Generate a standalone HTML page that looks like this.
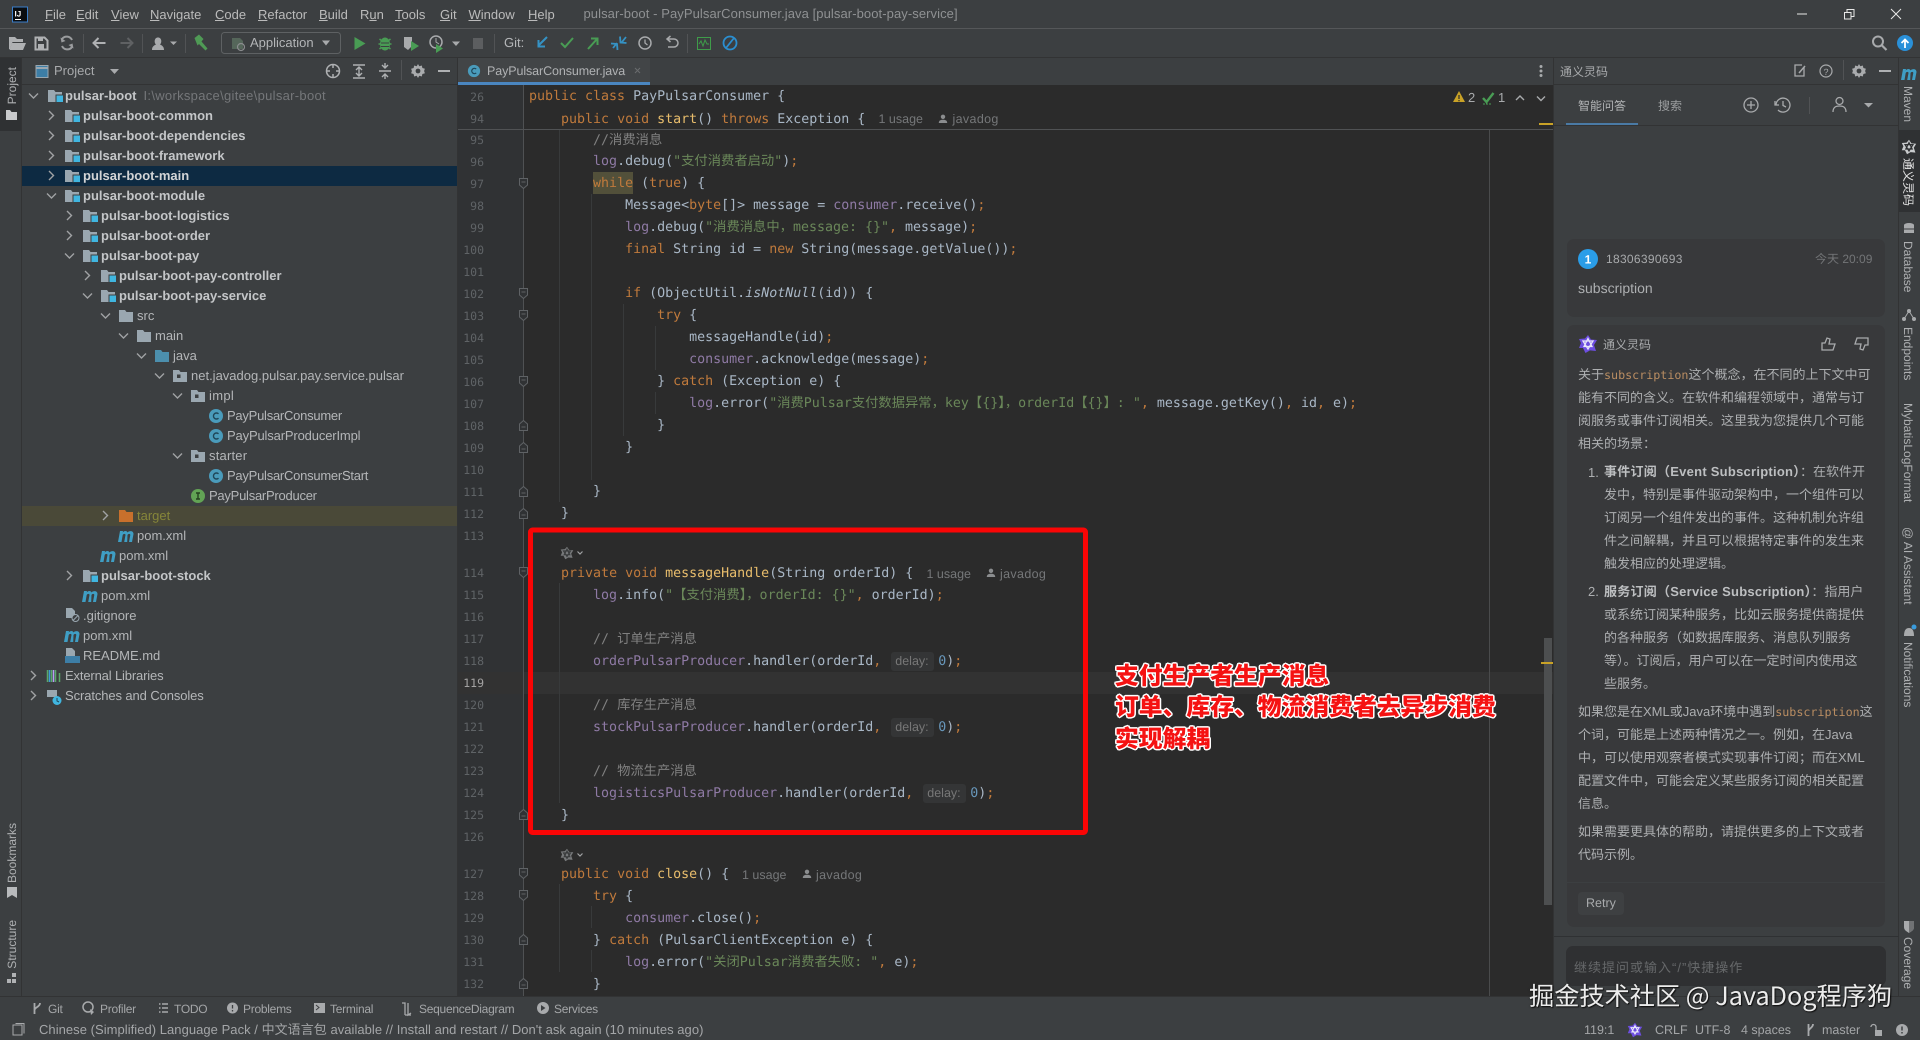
<!DOCTYPE html>
<html><head><meta charset="utf-8"><title>pulsar-boot</title>
<style>
html,body{margin:0;padding:0;width:1920px;height:1040px;overflow:hidden;background:#3c3f41}
*{box-sizing:border-box}
.a{position:absolute}
body{font-family:"Liberation Sans","Noto Sans CJK SC",sans-serif;color:#bbb;font-size:13px;text-rendering:geometricPrecision}
#root{position:absolute;left:0;top:0;width:1920px;height:1040px;filter:blur(.35px)}
.m{position:absolute;top:4px;height:21px;line-height:21px;font-size:13px;color:#bbb;white-space:nowrap}
.t{position:absolute;height:20px;line-height:20px;color:#b4b6b8;letter-spacing:-.25px;white-space:nowrap}
.b{font-weight:bold;letter-spacing:0;color:#c4c6c8}
.c{position:absolute;left:529px;margin:0;height:22px;line-height:22px;font:13.3px/22px "DejaVu Sans Mono","Noto Sans CJK SC",monospace;color:#a9b7c6;white-space:pre}
.n{position:absolute;left:458px;width:26px;height:22px;line-height:22px;text-align:right;font:11.5px/22px "DejaVu Sans Mono",monospace;color:#5f6366}
.k{color:#c07a3c}.s{color:#6a8759}.g{color:#808080}.f{color:#8f7aa5}.y{color:#e8bd6c}.h{color:#7f8183}.num{color:#6897bb}
.i{font-style:italic}
.u{position:absolute;font:12.5px/22px "Liberation Sans",sans-serif;color:#757779;height:22px;white-space:nowrap}
.j{letter-spacing:.35px}
.d{display:inline-block;width:43px;height:19px;margin:0 4px 0 10px;background:#343536;border-radius:3px;font:12.5px/19px "Liberation Sans",sans-serif;color:#777;padding-left:4px;vertical-align:top;margin-top:1px}
.vr{position:absolute;writing-mode:vertical-rl;text-orientation:sideways;font-size:12px;line-height:16px;width:16px;color:#aeb0b2;white-space:nowrap}
.vl{position:absolute;writing-mode:vertical-rl;text-orientation:sideways;transform:rotate(180deg);font-size:12px;line-height:16px;width:16px;color:#aeb0b2;white-space:nowrap}
.p{position:absolute;height:23px;line-height:23px;font-size:13px;color:#adafb1;white-space:nowrap}
.p code{font:11.7px/23px "DejaVu Sans Mono",monospace;color:#b98d62}
.p b{color:#bdbfc1;letter-spacing:.25px}
.st{position:absolute;top:1020px;height:20px;line-height:20px;font-size:12.5px;color:#a4a6a8;white-space:nowrap}
.tb{position:absolute;top:999px;height:20px;line-height:20px;font-size:12px;letter-spacing:-.27px;color:#a4a6a8;white-space:nowrap}
.an{position:absolute;left:1115px;height:30px;line-height:30px;font-size:23.8px;font-weight:900;color:#f51212;white-space:nowrap;font-family:"Noto Sans CJK SC",sans-serif;text-shadow:-1.5px 0 #fff,1.5px 0 #fff,0 -1.5px #fff,0 1.5px #fff,-1.2px -1.2px #fff,1.2px -1.2px #fff,-1.2px 1.2px #fff,1.2px 1.2px #fff}
</style></head><body><div id="root">

<!-- structural backgrounds -->
<div class="a" style="left:0;top:28px;width:1920px;height:1px;background:#555759"></div>
<div class="a" style="left:0;top:57px;width:1920px;height:1px;background:#323334"></div>
<div class="a" style="left:0;top:58px;width:21px;height:73px;background:#2f3133"></div>
<div class="a" style="left:21px;top:58px;width:1px;height:938px;background:#323334"></div>
<div class="a" style="left:22px;top:84px;width:436px;height:1px;background:#323334"></div>
<div class="a" style="left:22px;top:165.7px;width:435px;height:20px;background:#0d2a42"></div>
<div class="a" style="left:22px;top:505.5px;width:435px;height:20px;background:#4a4938"></div>
<div class="a" style="left:457px;top:58px;width:1px;height:938px;background:#323334"></div>

<!-- editor -->
<div class="a" style="left:458px;top:58px;width:192px;height:27px;background:#424547"></div>
<div class="a" style="left:458px;top:82px;width:192px;height:3px;background:#4a86c0"></div>
<div class="a" style="left:458px;top:85px;width:1095px;height:911px;background:#2b2b2b;overflow:hidden"></div>
<div class="a" style="left:458px;top:85px;width:66px;height:911px;background:#303234"></div>
<div class="a" style="left:458px;top:671.6px;width:1095px;height:22px;background:#323232"></div>
<div class="a" style="left:1489px;top:129px;width:1px;height:867px;background:#4a4b4c"></div>
<div class="a" style="left:593px;top:172px;width:40px;height:22px;background:#52503a"></div>
<div class="a" style="left:1544px;top:638px;width:8px;height:267px;background:#4d4f50"></div>
<div class="a" style="left:1539px;top:122.5px;width:14px;height:2px;background:#c9a227"></div>
<div class="a" style="left:1541px;top:662px;width:12px;height:2px;background:#c9a227"></div>

<!-- right panel -->
<div class="a" style="left:1553px;top:58px;width:1px;height:938px;background:#323334"></div>
<div class="a" style="left:1554px;top:84px;width:345px;height:1px;background:#323334"></div>
<div class="a" style="left:1554px;top:125px;width:345px;height:1px;background:#323334"></div>
<div class="a" style="left:1566px;top:123px;width:72px;height:2px;background:#4a7aa5"></div>
<div class="a" style="left:1898px;top:58px;width:1px;height:938px;background:#323334"></div>
<div class="a" style="left:1899px;top:130px;width:21px;height:82px;background:#2f3133"></div>
<div class="a" style="left:1567px;top:239px;width:318px;height:78px;background:#38393b;border-radius:7px"></div>
<div class="a" style="left:1567px;top:325px;width:318px;height:557px;background:#38393b;border-radius:7px 7px 0 0"></div>
<div class="a" style="left:1567px;top:883px;width:318px;height:44px;background:#38393b;border-radius:0 0 7px 7px"></div>
<div class="a" style="left:1578px;top:892px;width:46px;height:23px;background:#3e4042;border-radius:4px"></div>
<div class="a" style="left:1554px;top:936px;width:345px;height:1px;background:#2f3133"></div>
<div class="a" style="left:1566px;top:946px;width:320px;height:40px;background:#2f3032;border-radius:7px"></div>
<div class="a" style="left:0;top:996px;width:1920px;height:1px;background:#323334"></div>

<!-- menu -->
<span class="m" style="left:45px"><u>F</u>ile</span>
<span class="m" style="left:76px"><u>E</u>dit</span>
<span class="m" style="left:111px"><u>V</u>iew</span>
<span class="m" style="left:150px"><u>N</u>avigate</span>
<span class="m" style="left:215px"><u>C</u>ode</span>
<span class="m" style="left:258px"><u>R</u>efactor</span>
<span class="m" style="left:319px"><u>B</u>uild</span>
<span class="m" style="left:360px">R<u>u</u>n</span>
<span class="m" style="left:395px"><u>T</u>ools</span>
<span class="m" style="left:440px"><u>G</u>it</span>
<span class="m" style="left:468.5px"><u>W</u>indow</span>
<span class="m" style="left:528px"><u>H</u>elp</span>
<span class="m" style="left:583.5px;top:3px;color:#8f9193;letter-spacing:.08px">pulsar-boot - PayPulsarConsumer.java [pulsar-boot-pay-service]</span>
<span class="a" style="left:250px;top:33px;line-height:20px;font-size:13px;color:#b4b6b8">Application</span>
<span class="a" style="left:504px;top:33px;line-height:20px;font-size:13px;color:#b4b6b8">Git:</span>

<!-- project header -->
<span class="a" style="left:54px;top:61px;line-height:20px;font-size:13px;color:#a8aaac">Project</span>
<span class="a" style="left:487px;top:61px;line-height:20px;font-size:12.5px;color:#b0b2b4;letter-spacing:-.1px">PayPulsarConsumer.java</span>

<!-- tree -->
<span class="t b" style="left:65px;top:85.7px">pulsar-boot</span><span class="t" style="left:143.5px;top:85.7px;color:#75777a;letter-spacing:.3px">I:\workspace\gitee\pulsar-boot</span>
<span class="t b" style="left:83px;top:105.7px">pulsar-boot-common</span>
<span class="t b" style="left:83px;top:125.7px">pulsar-boot-dependencies</span>
<span class="t b" style="left:83px;top:145.7px">pulsar-boot-framework</span>
<span class="t b" style="left:83px;top:165.7px;color:#d2d4d6">pulsar-boot-main</span>
<span class="t b" style="left:83px;top:185.7px">pulsar-boot-module</span>
<span class="t b" style="left:101px;top:205.7px">pulsar-boot-logistics</span>
<span class="t b" style="left:101px;top:225.7px">pulsar-boot-order</span>
<span class="t b" style="left:101px;top:245.7px">pulsar-boot-pay</span>
<span class="t b" style="left:119px;top:265.7px">pulsar-boot-pay-controller</span>
<span class="t b" style="left:119px;top:285.7px">pulsar-boot-pay-service</span>
<span class="t" style="left:137px;top:305.7px;letter-spacing:0">src</span>
<span class="t" style="left:155px;top:325.7px;letter-spacing:0">main</span>
<span class="t" style="left:173px;top:345.7px;letter-spacing:0">java</span>
<span class="t" style="left:191px;top:365.7px;letter-spacing:0">net.javadog.pulsar.pay.service.pulsar</span>
<span class="t" style="left:209px;top:385.7px;letter-spacing:.3px">impl</span>
<span class="t" style="left:227px;top:405.7px">PayPulsarConsumer</span>
<span class="t" style="left:227px;top:425.7px;letter-spacing:-.15px">PayPulsarProducerImpl</span>
<span class="t" style="left:209px;top:445.7px;letter-spacing:.2px">starter</span>
<span class="t" style="left:227px;top:465.7px">PayPulsarConsumerStart</span>
<span class="t" style="left:209px;top:485.7px">PayPulsarProducer</span>
<span class="t" style="left:137px;top:505.7px;color:#86863a;letter-spacing:0">target</span>
<span class="t" style="left:137px;top:525.7px;letter-spacing:0">pom.xml</span>
<span class="t" style="left:119px;top:545.7px;letter-spacing:0">pom.xml</span>
<span class="t b" style="left:101px;top:565.7px">pulsar-boot-stock</span>
<span class="t" style="left:101px;top:585.7px;letter-spacing:0">pom.xml</span>
<span class="t" style="left:83px;top:605.7px;letter-spacing:0">.gitignore</span>
<span class="t" style="left:83px;top:625.7px;letter-spacing:0">pom.xml</span>
<span class="t" style="left:83px;top:645.7px;letter-spacing:0">README.md</span>
<span class="t" style="left:65px;top:665.7px;letter-spacing:-.15px">External Libraries</span>
<span class="t" style="left:65px;top:685.7px;letter-spacing:-.1px">Scratches and Consoles</span>

<!-- line numbers -->
<div class="a" style="left:0;top:.5px">
<div class="n" style="top:85.7px">26</div><div class="n" style="top:107.3px">94</div>
<div class="n" style="top:128.3px">95</div><div class="n" style="top:150.3px">96</div><div class="n" style="top:172.3px">97</div><div class="n" style="top:194.3px">98</div><div class="n" style="top:216.3px">99</div><div class="n" style="top:238.3px">100</div><div class="n" style="top:260.3px">101</div><div class="n" style="top:282.3px">102</div><div class="n" style="top:304.3px">103</div><div class="n" style="top:326.3px">104</div><div class="n" style="top:348.3px">105</div><div class="n" style="top:370.3px">106</div><div class="n" style="top:392.3px">107</div><div class="n" style="top:414.3px">108</div><div class="n" style="top:436.3px">109</div><div class="n" style="top:458.3px">110</div><div class="n" style="top:480.3px">111</div><div class="n" style="top:502.3px">112</div><div class="n" style="top:524.3px">113</div>
<div class="n" style="top:561.6px">114</div><div class="n" style="top:583.6px">115</div><div class="n" style="top:605.6px">116</div><div class="n" style="top:627.6px">117</div><div class="n" style="top:649.6px">118</div><div class="n" style="top:671.6px;color:#a4a3a3">119</div><div class="n" style="top:693.6px">120</div><div class="n" style="top:715.6px">121</div><div class="n" style="top:737.6px">122</div><div class="n" style="top:759.6px">123</div><div class="n" style="top:781.6px">124</div><div class="n" style="top:803.6px">125</div><div class="n" style="top:825.6px">126</div>
<div class="n" style="top:862.6px">127</div><div class="n" style="top:884.6px">128</div><div class="n" style="top:906.6px">129</div><div class="n" style="top:928.6px">130</div><div class="n" style="top:950.6px">131</div><div class="n" style="top:972.6px">132</div>
</div>

<!-- code -->
<div class="a" style="left:0;top:1px">
<pre class="c" style="top:85.4px"><span class="k">public class </span>PayPulsarConsumer {</pre>
<pre class="c" style="top:108.2px">    <span class="k">public void </span><span class="y">start</span>() <span class="k">throws </span>Exception {</pre>
<pre class="c" style="top:129.3px">        <span class="g">//消费消息</span></pre>
<pre class="c" style="top:150.3px">        <span class="f">log</span>.debug(<span class="s">"支付消费者启动"</span>)<span class="k">;</span></pre>
<pre class="c" style="top:172.3px">        <span class="k">while </span>(<span class="k">true</span>) {</pre>
<pre class="c" style="top:194.3px">            Message&lt;<span class="k">byte</span>[]&gt; message = <span class="f">consumer</span>.receive()<span class="k">;</span></pre>
<pre class="c" style="top:216.3px">            <span class="f">log</span>.debug(<span class="s">"消费消息中，message: {}"</span><span class="k">, </span>message)<span class="k">;</span></pre>
<pre class="c" style="top:238.3px">            <span class="k">final </span>String id = <span class="k">new </span>String(message.getValue())<span class="k">;</span></pre>
<pre class="c" style="top:282.3px">            <span class="k">if </span>(ObjectUtil.<span class="i">isNotNull</span>(id)) {</pre>
<pre class="c" style="top:304.3px">                <span class="k">try </span>{</pre>
<pre class="c" style="top:326.3px">                    messageHandle(id)<span class="k">;</span></pre>
<pre class="c" style="top:348.3px">                    <span class="f">consumer</span>.acknowledge(message)<span class="k">;</span></pre>
<pre class="c" style="top:370.3px">                } <span class="k">catch </span>(Exception e) {</pre>
<pre class="c" style="top:392.3px">                    <span class="f">log</span>.error(<span class="s">"消费Pulsar支付数据异常，key【{}】，orderId【{}】: "</span><span class="k">, </span>message.getKey()<span class="k">, </span>id<span class="k">, </span>e)<span class="k">;</span></pre>
<pre class="c" style="top:414.3px">                }</pre>
<pre class="c" style="top:436.3px">            }</pre>
<pre class="c" style="top:480.3px">        }</pre>
<pre class="c" style="top:502.3px">    }</pre>
<pre class="c" style="top:561.6px">    <span class="k">private void </span><span class="y">messageHandle</span>(String orderId) {</pre>
<pre class="c" style="top:583.6px">        <span class="f">log</span>.info(<span class="s">"【支付消费】，orderId: {}"</span><span class="k">, </span>orderId)<span class="k">;</span></pre>
<pre class="c" style="top:627.6px">        <span class="g">// 订单生产消息</span></pre>
<pre class="c" style="top:649.6px">        <span class="f">orderPulsarProducer</span>.handler(orderId<span class="k">,</span><span class="d">delay:</span><span class="num">0</span>)<span class="k">;</span></pre>
<pre class="c" style="top:693.6px">        <span class="g">// 库存生产消息</span></pre>
<pre class="c" style="top:715.6px">        <span class="f">stockPulsarProducer</span>.handler(orderId<span class="k">,</span><span class="d">delay:</span><span class="num">0</span>)<span class="k">;</span></pre>
<pre class="c" style="top:759.6px">        <span class="g">// 物流生产消息</span></pre>
<pre class="c" style="top:781.6px">        <span class="f">logisticsPulsarProducer</span>.handler(orderId<span class="k">,</span><span class="d">delay:</span><span class="num">0</span>)<span class="k">;</span></pre>
<pre class="c" style="top:803.6px">    }</pre>
<pre class="c" style="top:862.6px">    <span class="k">public void </span><span class="y">close</span>() {</pre>
<pre class="c" style="top:884.6px">        <span class="k">try </span>{</pre>
<pre class="c" style="top:906.6px">            <span class="f">consumer</span>.close()<span class="k">;</span></pre>
<pre class="c" style="top:928.6px">        } <span class="k">catch </span>(PulsarClientException e) {</pre>
<pre class="c" style="top:950.6px">            <span class="f">log</span>.error(<span class="s">"关闭Pulsar消费者失败: "</span><span class="k">, </span>e)<span class="k">;</span></pre>
<pre class="c" style="top:972.6px">        }</pre>
</div>
<span class="u" style="left:878.5px;top:108px">1 usage</span><span class="u j" style="left:952.5px;top:108px">javadog</span>
<span class="u" style="left:926.5px;top:562.5px">1 usage</span><span class="u j" style="left:1000px;top:562.5px">javadog</span>
<span class="u" style="left:742px;top:863.5px">1 usage</span><span class="u j" style="left:816px;top:863.5px">javadog</span>
<span class="a" style="left:1468px;top:89px;line-height:18px;font-size:13px;color:#a8aaac">2</span>
<span class="a" style="left:1498px;top:89px;line-height:18px;font-size:13px;color:#a8aaac">1</span>

<!-- right panel text -->
<span class="a" style="left:1560px;top:62px;line-height:20px;font-size:12px;color:#a8aaac">通义灵码</span>
<span class="a" style="left:1578px;top:96px;line-height:20px;font-size:12px;color:#b0b2b4">智能问答</span>
<span class="a" style="left:1658px;top:96px;line-height:20px;font-size:12px;color:#9c9ea0">搜索</span>
<span class="a" style="left:1606px;top:249px;line-height:20px;font-size:12px;letter-spacing:.3px;color:#a8aaac">18306390693</span>
<span class="a" style="left:1815px;top:249px;line-height:20px;font-size:12px;color:#737577">今天 20:09</span>
<span class="a" style="left:1578px;top:278px;line-height:20px;font-size:14px;color:#adafb1">subscription</span>
<span class="a" style="left:1603px;top:335px;line-height:20px;font-size:12px;color:#a8aaac">通义灵码</span>
<div class="p" style="left:1578px;top:362.5px">关于<code>subscription</code>这个概念，在不同的上下文中可</div>
<div class="p" style="left:1578px;top:385.5px">能有不同的含义。在软件和编程领域中，通常与订</div>
<div class="p" style="left:1578px;top:408.5px">阅服务或事件订阅相关。这里我为您提供几个可能</div>
<div class="p" style="left:1578px;top:431.5px">相关的场景：</div>
<div class="p" style="left:1588px;top:461px">1.</div>
<div class="p" style="left:1604px;top:460px"><b>事件订阅（Event Subscription）</b>：在软件开</div>
<div class="p" style="left:1604px;top:483px">发中，特别是事件驱动架构中，一个组件可以</div>
<div class="p" style="left:1604px;top:506px">订阅另一个组件发出的事件。这种机制允许组</div>
<div class="p" style="left:1604px;top:529px">件之间解耦，并且可以根据特定事件的发生来</div>
<div class="p" style="left:1604px;top:552px">触发相应的处理逻辑。</div>
<div class="p" style="left:1588px;top:580px">2.</div>
<div class="p" style="left:1604px;top:579.5px"><b>服务订阅（Service Subscription）</b>：指用户</div>
<div class="p" style="left:1604px;top:602.5px">或系统订阅某种服务，比如云服务提供商提供</div>
<div class="p" style="left:1604px;top:625.5px">的各种服务（如数据库服务、消息队列服务</div>
<div class="p" style="left:1604px;top:648.5px">等）。订阅后，用户可以在一定时间内使用这</div>
<div class="p" style="left:1604px;top:671.5px">些服务。</div>
<div class="p" style="left:1578px;top:699.5px">如果您是在XML或Java环境中遇到<code>subscription</code>这</div>
<div class="p" style="left:1578px;top:722.5px">个词，可能是上述两种情况之一。例如，在Java</div>
<div class="p" style="left:1578px;top:745.5px">中，可以使用观察者模式实现事件订阅；而在XML</div>
<div class="p" style="left:1578px;top:768.5px">配置文件中，可能会定义某些服务订阅的相关配置</div>
<div class="p" style="left:1578px;top:791.5px">信息。</div>
<div class="p" style="left:1578px;top:819.5px">如果需要更具体的帮助，请提供更多的上下文或者</div>
<div class="p" style="left:1578px;top:842.5px">代码示例。</div>
<span class="a" style="left:1586px;top:893px;line-height:20px;font-size:12.5px;color:#a8aaac">Retry</span>
<span class="a" style="left:1574px;top:958px;line-height:20px;font-size:13px;letter-spacing:1px;color:#66686a">继续提问或输入“/”快捷操作</span>

<!-- vertical labels -->
<span class="vl" style="left:4px;top:67px">Project</span>
<span class="vl" style="left:4px;top:823px">Bookmarks</span>
<span class="vl" style="left:4px;top:920px">Structure</span>
<span class="vr" style="left:1900px;top:86px">Maven</span>
<span class="vr" style="left:1900px;top:158px;color:#e4e4e4">通义灵码</span>
<span class="vr" style="left:1900px;top:241px">Database</span>
<span class="vr" style="left:1900px;top:327px">Endpoints</span>
<span class="vr" style="left:1900px;top:403px">MybatisLogFormat</span>
<span class="vr" style="left:1900px;top:527px">@ AI Assistant</span>
<span class="vr" style="left:1900px;top:642px">Notifications</span>
<span class="vr" style="left:1900px;top:937px">Coverage</span>

<!-- bottom tool buttons -->
<span class="tb" style="left:48px">Git</span>
<span class="tb" style="left:100px">Profiler</span>
<span class="tb" style="left:174px">TODO</span>
<span class="tb" style="left:243px">Problems</span>
<span class="tb" style="left:330px">Terminal</span>
<span class="tb" style="left:419px">SequenceDiagram</span>
<span class="tb" style="left:554px">Services</span>

<!-- status -->
<span class="st" style="left:39px;font-size:13px;letter-spacing:.04px">Chinese (Simplified) Language Pack / 中文语言包 available // Install and restart // Don't ask again (10 minutes ago)</span>
<span class="st" style="left:1584px">119:1</span>
<span class="st" style="left:1655px">CRLF</span>
<span class="st" style="left:1695px">UTF-8</span>
<span class="st" style="left:1741px">4 spaces</span>
<span class="st" style="left:1822px">master</span>

<!-- icons -->
<svg class="a" style="left:0;top:0" width="1920" height="1040" viewBox="0 0 1920 1040" xmlns="http://www.w3.org/2000/svg" fill="none">
<defs>
<symbol id="mod" viewBox="0 0 16 16"><path d="M1 2h6l1.5 2H15v10H1z" fill="#9aa7b0"/><rect x="8.500" y="6.500" width="7.500" height="8" fill="#3c3f41"/><rect x="9.500" y="7.500" width="6.500" height="6.500" fill="#40b6e0"/></symbol>
<symbol id="fld" viewBox="0 0 16 16"><path d="M1 2h6l1.5 2H15v10H1z" fill="#9aa7b0"/></symbol>
<symbol id="blu" viewBox="0 0 16 16"><path d="M1 2h6l1.5 2H15v10H1z" fill="#4c8fad"/></symbol>
<symbol id="org" viewBox="0 0 16 16"><path d="M1 2h6l1.5 2H15v10H1z" fill="#c8702c"/></symbol>
<symbol id="pkg" viewBox="0 0 16 16"><path d="M1 2h6l1.5 2H15v10H1z" fill="#9aa7b0"/><rect x="5" y="6.500" width="3.500" height="3.500" fill="#3c3f41"/></symbol>
<symbol id="cls" viewBox="0 0 16 16"><circle cx="8" cy="8" r="7" fill="#4a9bbb"/><path d="M10.500 5.800A3 3 0 1 0 10.500 10.200" stroke="#1f4658" stroke-width="1.400"/></symbol>
<symbol id="itf" viewBox="0 0 16 16"><circle cx="8" cy="8" r="7" fill="#62a355"/><path d="M6 5h4M8 5v6M6 11h4" stroke="#24401f" stroke-width="1.400"/></symbol>
<symbol id="mvn" viewBox="0 0 16 16"><path d="M0 14L2 3h3l-.3 1.500C6 2.500 9 2.500 9.500 4.500 11 2.500 15.500 2.500 15.500 6L14 14h-3l1.300-7c0-1.500-2-1.500-2.800 0L9.200 14h-3l1.300-7c0-1.500-2-1.500-2.800 0L3.500 14z" fill="#3f9ec4"/></symbol>
<symbol id="fo" viewBox="0 0 9 11"><path d="M.5.5h8v6.500L4.500 10.500.5 7z" fill="#303234" stroke="#5f6265"/><path d="M2.500 4h4" stroke="#5f6265"/></symbol>
<symbol id="fc" viewBox="0 0 9 11"><path d="M.5 10.500h8V4L4.500.5.5 4z" fill="#303234" stroke="#5f6265"/><path d="M2.500 7h4" stroke="#5f6265"/></symbol>
<symbol id="cv" viewBox="0 0 20 20"><path d="M10 1l3 4.500 6 .5-3 5 2 6-6-.6L7.500 19 5 14H1l2-5-2-4 6-.5z" fill="#76787a"/><path d="M5 7h10l-5 8zM10 4.500l4 8H6z" fill="none" stroke="#3a3c3d" stroke-width="1.600"/></symbol>
<symbol id="us" viewBox="0 0 10 10"><circle cx="5" cy="2.800" r="2.200" fill="#8b8d8f"/><path d="M.8 9c0-2.600 2-3.200 4.200-3.200S9.200 6.400 9.200 9z" fill="#8b8d8f"/></symbol>
<symbol id="logo" viewBox="0 0 20 20"><path d="M10 1l3 4.500 6 .5-3 5 2 6-6-.6L7.500 19 5 14H1l2-5-2-4 6-.5z" fill="#6d4ee0"/><path d="M5 7h10l-5 8zM10 4.500l4 8H6z" fill="none" stroke="#e8e6fa" stroke-width="1.300"/></symbol>
<symbol id="logow" viewBox="0 0 20 20"><path d="M10 1l3 4.500 6 .5-3 5 2 6-6-.6L7.500 19 5 14H1l2-5-2-4 6-.5z" fill="#c8cacc"/><path d="M5 7h10l-5 8zM10 4.500l4 8H6z" fill="none" stroke="#2f3133" stroke-width="1.500"/></symbol>
<symbol id="gear" viewBox="0 0 16 16"><path d="M8 1l1.300 2.200 2.500-.7.6 2.500 2.500.7-.8 2.300 .8 2.300-2.500.7-.6 2.500-2.500-.7L8 15l-1.300-2.200-2.500.7-.6-2.500L1.100 10.300 1.900 8l-.8-2.300 2.500-.7.6-2.500 2.500.7z" fill="#a9abad"/><circle cx="8" cy="8" r="2.400" fill="#3c3f41"/></symbol>
</defs>

<!-- logo -->
<rect x="12.500" y="7" width="15" height="15" fill="#0a0d10" stroke="#3a7dc9" stroke-width="1"/>
<text x="14.500" y="16.500" font-family="Liberation Sans" font-size="8" font-weight="bold" fill="#fff">IJ</text>
<path d="M15 19.500h6" stroke="#fff" stroke-width="1"/>

<!-- window controls -->
<path d="M1797 14h10" stroke="#e8e8e8"/>
<path d="M1847 12.500v-3h7v7h-3M1844.500 12.500h6.500v6.500h-6.500z" stroke="#e8e8e8" fill="none"/>
<path d="M1891 9l10 10M1901 9l-10 10" stroke="#e8e8e8"/>

<!-- toolbar -->
<path d="M9 37h6l2 2h6v3H12.500l-2.500 7H9z" fill="#afb1b3"/><path d="M12 43h14l-3 7H9.500z" fill="#afb1b3"/>
<path d="M35.500 37.500h9l3 3v9h-12z" stroke="#afb1b3" stroke-width="2"/><rect x="38" y="37" width="5" height="4" fill="#afb1b3"/><rect x="38" y="44" width="6" height="5" fill="#afb1b3"/>
<path d="M72 40a5.800 5.800 0 0 0-10-1M62 46a5.800 5.800 0 0 0 10 1" stroke="#9a9c9e" stroke-width="2"/><path d="M60.500 37.500l1 5 4-1.500zM73.500 48.500l-1-5-4 1.500z" fill="#9a9c9e"/>
<path d="M83.500 34v19M142.500 34v19M185.500 34v19M494.500 34v19M687.500 34v19" stroke="#515355"/>
<path d="M93.500 43h12M98.500 38l-5 5 5 5" stroke="#afb1b3" stroke-width="2"/>
<path d="M132.500 43h-12M127.500 38l5 5-5 5" stroke="#5f6163" stroke-width="2"/>
<path d="M152 50c0-3.500 2-4.500 4-5.500-2-1.500-2-7 2-7s4 5.500 2 7c2 1 4 2 4 5.500z" fill="#a8aaac"/><path d="M170 41.500h7l-3.500 3.500z" fill="#a8aaac"/>
<path d="M194.500 38l4.500-3.500 4.500 4.500-2 2.500 6 7-2 2-6.500-6.500-1.500 1.500z" fill="#4f9a55"/>
<rect x="221.500" y="32.500" width="119" height="21" rx="3" stroke="#5e6163"/>
<path d="M232 38h8l3 3v8h-11z" fill="#55665a"/><circle cx="241" cy="47" r="3.500" stroke="#8a8c8e" stroke-width="1.200"/>
<path d="M322 40.500h8l-4 5z" fill="#a8aaac"/>
<path d="M354.500 37l11 6.500-11 6.500z" fill="#499c54"/>
<ellipse cx="385" cy="44" rx="5" ry="6.500" fill="#499c54"/><path d="M379.500 39l2.500 2M390.500 39l-2.500 2M378.500 44h2M391.500 44h-2M379.500 49l2.500-2M390.500 49l-2.500-2" stroke="#499c54" stroke-width="1.500"/><path d="M381 43h8M381 46.500h8" stroke="#3c3f41"/>
<path d="M404 37h8v9l-4 4-4-3z" fill="#a8aaac"/><path d="M411 41l8 5-8 5z" fill="#499c54"/>
<circle cx="436" cy="42" r="6" stroke="#a8aaac" stroke-width="1.500"/><path d="M436 38v4l3 2" stroke="#a8aaac"/><path d="M436 44l7 4.500-7 4.500z" fill="#499c54"/>
<path d="M452 41.500h8l-4 4.500z" fill="#a8aaac"/>
<rect x="473" y="38" width="10" height="11" fill="#5c5e60"/>
<path d="M547 37l-9 9M538.500 40v6.500h6.500" stroke="#3592c4" stroke-width="2"/>
<path d="M561 43l4 4 8-9" stroke="#499c54" stroke-width="2"/>
<path d="M588 49l9-10M591 38.500h6.500v6.500" stroke="#499c54" stroke-width="2"/>
<path d="M613 48l4-5M622 42l4-5M620 36.500l.5 6 6 .5M611 43.500l6 .5.500 6" stroke="#3592c4" stroke-width="1.800"/>
<circle cx="645" cy="43" r="6" stroke="#a8aaac" stroke-width="1.500"/><path d="M645 39.500V43l2.500 2" stroke="#a8aaac" stroke-width="1.300"/>
<path d="M668 39h6a4 4 0 0 1 0 8h-6M670.500 36l-3.500 3 3.500 3" stroke="#a8aaac" stroke-width="1.500"/>
<rect x="697.500" y="37.500" width="13" height="12" stroke="#3f9c4a"/><path d="M699 44l2-3 2 5 2-6 2 4h2" stroke="#3f9c4a"/>
<circle cx="730" cy="43" r="6.500" stroke="#2b8fd0" stroke-width="1.800"/><path d="M726 48l8-10" stroke="#2b8fd0" stroke-width="1.800"/>
<circle cx="1878" cy="41.500" r="5" stroke="#a8aaac" stroke-width="2"/><path d="M1882 45.500l4.500 4.500" stroke="#a8aaac" stroke-width="2.200"/>
<circle cx="1905" cy="43" r="8" fill="#2a90d8"/><path d="M1905 48v-8M1901.500 43l3.500-3.500 3.500 3.500" stroke="#fff" stroke-width="1.800"/>

<!-- left stripe icons -->
<path d="M6 110h4l1.500 2H17v8H6z" fill="#c8cacc"/>
<path d="M7 887h10v11l-5-3-5 3z" fill="#b8babc"/>
<rect x="12" y="973" width="4" height="4" fill="#b0b2b4"/><rect x="7" y="979" width="4" height="4" fill="#b0b2b4"/><rect x="12" y="979" width="4" height="4" fill="#b0b2b4"/>

<!-- project header icons -->
<rect x="36" y="65.500" width="12" height="12" fill="#3d7ea6" stroke="#9aa7b0"/><path d="M36 68h12" stroke="#9aa7b0" stroke-width="2"/>
<path d="M110 69h9l-4.500 5z" fill="#a8aaac"/>
<circle cx="333" cy="71" r="6.500" stroke="#afb1b3" stroke-width="1.500"/><path d="M333 64v4M333 74v4M326 71h4M336 71h4" stroke="#afb1b3" stroke-width="1.500"/>
<path d="M353 65h12M353 78h12M356 70l3-3 3 3M356 73l3 3 3-3M359 67v9" stroke="#afb1b3" stroke-width="1.400"/>
<path d="M379 71h12M382 65l3 3 3-3M382 77l3-3 3 3M385 63v5M385 74v5" stroke="#afb1b3" stroke-width="1.400"/>
<path d="M401.500 60v20" stroke="#515355"/>
<use href="#gear" x="410" y="63" width="16" height="16"/>
<path d="M438 71h12" stroke="#afb1b3" stroke-width="2"/>
<use href="#cls" x="467" y="64" width="14" height="14"/>
<path d="M635 68l5 5M640 68l-5 5" stroke="#6a6c6e"/>

<!-- tree arrows -->
<g stroke="#a0a2a4" stroke-width="1.400">
<path d="M29 93.500l4.500 4.500 4.500-4.500"/>
<path d="M49 111l4.500 4.500-4.500 4.500M49 131l4.500 4.500-4.500 4.500M49 151l4.500 4.500-4.500 4.500M49 171l4.500 4.500-4.500 4.500"/>
<path d="M47 193.500l4.500 4.500 4.500-4.500"/>
<path d="M67 211l4.500 4.500-4.500 4.500M67 231l4.500 4.500-4.500 4.500"/>
<path d="M65 253.500l4.500 4.500 4.500-4.500"/>
<path d="M85 271l4.500 4.500-4.500 4.500"/>
<path d="M83 293.500l4.500 4.500 4.500-4.500M101 313.500l4.500 4.500 4.500-4.500M119 333.500l4.500 4.500 4.500-4.500M137 353.500l4.500 4.500 4.500-4.500M155 373.500l4.500 4.500 4.500-4.500M173 393.500l4.500 4.500 4.500-4.500M173 453.500l4.500 4.500 4.500-4.500"/>
<path d="M103 511l4.500 4.500-4.500 4.500M67 571l4.500 4.500-4.500 4.500M31 671l4.500 4.500-4.500 4.500M31 691l4.500 4.500-4.500 4.500"/>
</g>

<!-- tree icons -->
<use href="#mod" x="47" y="88" width="16" height="16"/>
<use href="#mod" x="64" y="108" width="16" height="16"/><use href="#mod" x="64" y="128" width="16" height="16"/><use href="#mod" x="64" y="148" width="16" height="16"/><use href="#mod" x="64" y="168" width="16" height="16"/><use href="#mod" x="64" y="188" width="16" height="16"/>
<use href="#mod" x="82" y="208" width="16" height="16"/><use href="#mod" x="82" y="228" width="16" height="16"/><use href="#mod" x="82" y="248" width="16" height="16"/>
<use href="#mod" x="100" y="268" width="16" height="16"/><use href="#mod" x="100" y="288" width="16" height="16"/>
<use href="#fld" x="118" y="308" width="16" height="16"/><use href="#fld" x="136" y="328" width="16" height="16"/><use href="#blu" x="154" y="348" width="16" height="16"/>
<use href="#pkg" x="172" y="368" width="16" height="16"/><use href="#pkg" x="190" y="388" width="16" height="16"/>
<use href="#cls" x="208" y="408" width="16" height="16"/><use href="#cls" x="208" y="428" width="16" height="16"/>
<use href="#pkg" x="190" y="448" width="16" height="16"/><use href="#cls" x="208" y="468" width="16" height="16"/>
<use href="#itf" x="190" y="488" width="16" height="16"/>
<use href="#org" x="118" y="508" width="16" height="16"/><use href="#mvn" x="118" y="528" width="16" height="16"/><use href="#mvn" x="100" y="548" width="16" height="16"/>
<use href="#mod" x="82" y="568" width="16" height="16"/><use href="#mvn" x="82" y="588" width="16" height="16"/>
<path d="M66 608h6l3 3v7H66z" fill="#9aa7b0"/><circle cx="75.500" cy="618" r="3.500" fill="#3c3f41" stroke="#9aa7b0"/><path d="M73 620.500l5-5" stroke="#9aa7b0"/>
<use href="#mvn" x="64" y="628" width="16" height="16"/>
<path d="M66 648h6l3 3v5H66z" fill="#9aa7b0"/><rect x="65" y="656" width="15" height="7" fill="#3d7ea6"/>
<path d="M47.500 670v12M51.500 670v12M55.500 670v12M59.500 673v9" stroke="#59a869" stroke-width="1.500"/><path d="M49.500 670v12" stroke="#3d9bd6" stroke-width="1.500"/><path d="M53.500 670v12" stroke="#b99bf8" stroke-width="1.500"/>
<path d="M47 690h10v7H47z" fill="#9aa7b0"/><circle cx="57" cy="700.500" r="4.500" fill="#40b6e0"/><path d="M57 698v3l2 1" stroke="#1f4658"/>

<!-- gutter -->
<path d="M523.500 85v911" stroke="#4f5153"/>
<path d="M458 129.500H1553" stroke="#505254"/>
<g stroke="#383a3b"><path d="M559.500 130v372M591.500 194v286M623.500 304v132M655.500 326v44M655.500 392v22M559.500 583v220M559.500 884v88M591.500 906v22M591.500 950v22"/></g>
<use href="#fo" x="519" y="178" width="9" height="11"/><use href="#fo" x="519" y="288" width="9" height="11"/><use href="#fo" x="519" y="310" width="9" height="11"/><use href="#fo" x="519" y="376" width="9" height="11"/><use href="#fo" x="519" y="567" width="9" height="11"/><use href="#fo" x="519" y="868" width="9" height="11"/><use href="#fo" x="519" y="890" width="9" height="11"/>
<use href="#fc" x="519" y="420" width="9" height="11"/><use href="#fc" x="519" y="442" width="9" height="11"/><use href="#fc" x="519" y="486" width="9" height="11"/><use href="#fc" x="519" y="508" width="9" height="11"/><use href="#fc" x="519" y="809" width="9" height="11"/><use href="#fc" x="519" y="934" width="9" height="11"/><use href="#fc" x="519" y="978" width="9" height="11"/>
<use href="#us" x="938" y="114" width="10" height="10"/><use href="#us" x="986" y="568" width="10" height="10"/><use href="#us" x="802" y="869" width="10" height="10"/>
<use href="#cv" x="560" y="546" width="14" height="14"/><path d="M577.500 551.500l2.500 2.500 2.500-2.500" stroke="#a0a2a4" stroke-width="1.200"/>
<use href="#cv" x="560" y="848" width="14" height="14"/><path d="M577.500 853.500l2.500 2.500 2.500-2.500" stroke="#a0a2a4" stroke-width="1.200"/>
<path d="M1459 91l6 11h-12z" fill="#c9a227"/><path d="M1459 95v4M1459 100v1.200" stroke="#2b2b2b" stroke-width="1.200"/>
<path d="M1483 98l3.500 4 7-9" stroke="#499c54" stroke-width="2.400"/><path d="M1483 104l8 0" stroke="#499c54" stroke-dasharray="2 1"/>
<path d="M1516 100l4-4 4 4M1537 96.500l4 4 4-4" stroke="#a8aaac" stroke-width="1.400"/>
<circle cx="1541" cy="66.500" r="1.500" fill="#a8aaac"/><circle cx="1541" cy="71" r="1.500" fill="#a8aaac"/><circle cx="1541" cy="75.500" r="1.500" fill="#a8aaac"/>

<!-- right panel icons -->
<path d="M1804 67v9h-9v-11h7" stroke="#a8aaac" stroke-width="1.300"/><path d="M1799 73l6-7" stroke="#a8aaac" stroke-width="1.500"/>
<circle cx="1826" cy="71" r="6" stroke="#a8aaac" stroke-width="1.200"/><text x="1823.500" y="75" font-size="9" font-family="Liberation Sans" fill="#a8aaac">?</text>
<path d="M1843.500 60v20" stroke="#515355"/>
<use href="#gear" x="1851" y="63" width="16" height="16"/>
<path d="M1879 71h12" stroke="#afb1b3" stroke-width="2"/>
<circle cx="1751" cy="105" r="7" stroke="#a8aaac" stroke-width="1.300"/><path d="M1747 105h8M1751 101v8" stroke="#a8aaac" stroke-width="1.300"/>
<path d="M1776 105a7 7 0 1 1 2 5" stroke="#a8aaac" stroke-width="1.300"/><path d="M1775 101v4h4M1783 101v4.500l3 1.500" stroke="#a8aaac" stroke-width="1.300"/>
<path d="M1809.500 97v17" stroke="#515355"/>
<circle cx="1839.500" cy="101" r="3.500" stroke="#a8aaac" stroke-width="1.300"/><path d="M1833 112c0-5 3-6 6.500-6s6.500 1 6.500 6" stroke="#a8aaac" stroke-width="1.300"/>
<path d="M1864 103h9l-4.500 4.500z" fill="#a8aaac"/>
<circle cx="1588" cy="259" r="10" fill="#2a9de8"/><text x="1588" y="263.500" text-anchor="middle" font-size="12" font-weight="bold" font-family="Liberation Sans" fill="#fff">1</text>
<use href="#logo" x="1578" y="334" width="20" height="20"/>
<path d="M1822 343v7h11l2-6h-6l1-5-3-1-2 5z" stroke="#a8aaac" stroke-width="1.300"/>
<path d="M1868 345v-7h-11l-2 6h6l-1 5 3 1 2-5z" stroke="#a8aaac" stroke-width="1.300"/>

<!-- right stripe icons -->
<use href="#mvn" x="1901" y="66" width="16" height="16"/>
<use href="#logow" x="1901" y="139" width="16" height="16"/>
<ellipse cx="1909" cy="225" rx="5" ry="2" fill="#a8aaac"/><rect x="1904" y="225" width="10" height="8" fill="#a8aaac"/><path d="M1904 229h10" stroke="#3c3f41"/>
<circle cx="1909" cy="311" r="2" fill="#a8aaac"/><circle cx="1904" cy="319" r="2" fill="#a8aaac"/><circle cx="1914" cy="319" r="2" fill="#a8aaac"/><path d="M1909 311l-5 8M1909 311l5 8" stroke="#a8aaac"/>
<path d="M1904 636c0-6 2-8 5-8s5 2 5 8z" fill="#a8aaac"/><circle cx="1914" cy="627" r="2.500" fill="#3a9bdc"/>
<path d="M1904 921h10v6c0 3-2 4-5 6-3-2-5-3-5-6z" fill="#a8aaac"/><path d="M1909 921h5v6c0 3-2 4-5 6z" fill="#707274"/>

<!-- bottom icons -->
<path d="M34.500 1003v11M40 1003c0 4-5 4-5.500 7" stroke="#a8aaac" stroke-width="1.800"/>
<circle cx="88" cy="1007" r="5" stroke="#a8aaac" stroke-width="1.500"/><path d="M90 1009l4 3-3 3z" fill="#a8aaac"/>
<path d="M159 1004h1.500M159 1008h1.500M159 1012h1.500M162 1004h6M162 1008h6M162 1012h6" stroke="#a8aaac" stroke-width="1.500"/>
<circle cx="232.500" cy="1008" r="5.500" fill="#a8aaac"/><path d="M232.500 1005v3.500M232.500 1010v1.500" stroke="#3c3f41" stroke-width="1.300"/>
<rect x="314" y="1003" width="11" height="10" fill="#a8aaac"/><path d="M316 1005l3 2.500-3 2.500" stroke="#3c3f41"/>
<path d="M402 1003h3v12M408 1003v12l3-2M405 1015h6" stroke="#a8aaac" stroke-width="1.300"/>
<circle cx="543" cy="1008" r="6" fill="#a8aaac"/><path d="M541 1005l4.500 3-4.500 3z" fill="#3c3f41"/>
<rect x="13" y="1025" width="9" height="10" stroke="#a8aaac"/><path d="M15.500 1023.500h8.500v10" stroke="#a8aaac"/>
<use href="#logo" x="1627" y="1022" width="16" height="16"/>
<path d="M1808.500 1024v12M1813 1024c0 4-4 4-4.500 7" stroke="#a8aaac" stroke-width="1.800"/>
<rect x="1875" y="1030" width="7" height="6" fill="#a8aaac"/><path d="M1876 1030v-3a2.500 2.500 0 0 0-5 0" stroke="#a8aaac" stroke-width="1.300"/>
<circle cx="1902" cy="1030" r="6" fill="#a8aaac"/><path d="M1902 1026.500v4M1902 1032v1.500" stroke="#3c3f41" stroke-width="1.500"/>

<!-- red box -->
<rect x="530.500" y="530" width="555" height="302.500" rx="2" stroke="#fa0505" stroke-width="5"/>
</svg>

<!-- annotation -->
<div class="an" style="top:659px">支付生产者生产消息</div>
<div class="an" style="top:690px">订单、库存、物流消费者去异步消费</div>
<div class="an" style="top:722px">实现解耦</div>

<!-- watermark -->
<div class="a" style="left:1529px;top:978px;height:34px;line-height:34px;font-size:25.2px;color:#ececec;white-space:nowrap;font-family:'Noto Sans CJK SC','Liberation Sans',sans-serif;text-shadow:1px 1px 1px #111,0 0 2px #222">掘金技术社区 @ JavaDog程序狗</div>

</div></body></html>
